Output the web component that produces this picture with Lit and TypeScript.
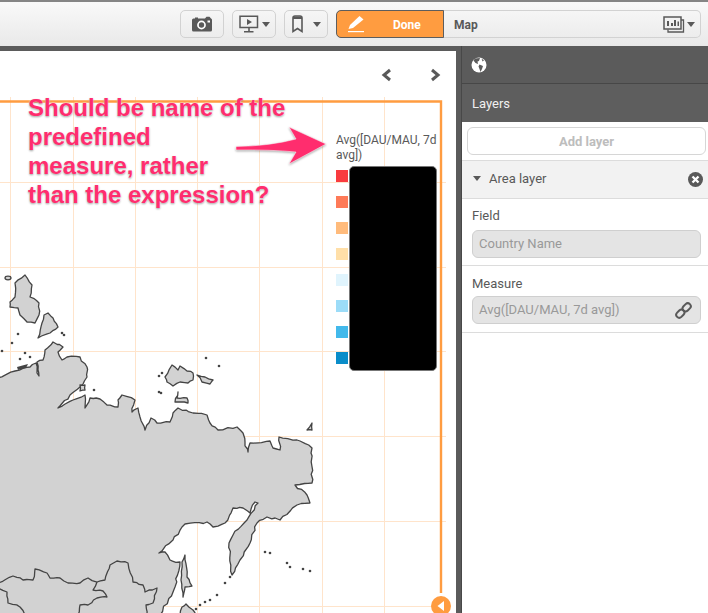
import { LitElement, html, css, svg } from "lit";
import { customElement } from "lit/decorators.js";

type P = [number, number];

// small deterministic wobble so the coast does not look polygonal
function rough(pts: P[], closed = true, amp = 1.1): string {
  let seed = 7;
  const rnd = () => {
    seed = (seed * 16807) % 2147483647;
    return (seed % 1000) / 500 - 1;
  };
  const out: P[] = [];
  const n = pts.length;
  for (let i = 0; i < n; i++) {
    const a = pts[i];
    out.push(a);
    if (i === n - 1 && !closed) break;
    const b = pts[(i + 1) % n];
    const d = Math.hypot(b[0] - a[0], b[1] - a[1]);
    const steps = Math.floor(d / 5);
    for (let k = 1; k <= steps; k++) {
      const t = k / (steps + 1);
      out.push([a[0] + (b[0] - a[0]) * t + rnd() * amp, a[1] + (b[1] - a[1]) * t + rnd() * amp]);
    }
  }
  return "M" + out.map((p) => p[0].toFixed(1) + " " + p[1].toFixed(1)).join("L") + (closed ? "Z" : "");
}

const MAINLAND: P[] = [
  [-3, 378], [15, 371], [30, 367], [36, 363], [37, 373], [39, 376], [38, 370], [37, 362], [43, 360], [45, 350], [53, 342],
  [63, 347], [58, 352], [62, 360], [67, 357], [80, 357], [87, 367], [87, 377], [80, 387], [70, 395], [58, 408], [73, 400],
  [85, 395], [85, 408], [90, 398], [100, 399], [107, 405], [118, 407], [118, 400], [122, 395], [135, 400], [132, 412], [138, 408], [140, 417],
  [145, 430], [151, 418], [157, 423], [170, 422], [173, 413], [178, 408], [193, 413], [207, 415], [210, 423], [218, 430],
  [237, 427], [243, 433], [245, 442], [248, 452], [250, 443], [270, 441], [273, 448], [280, 450], [279, 437], [297, 440],
  [312, 448], [312, 483], [295, 485], [307, 495], [310, 503], [297, 505], [280, 520], [267, 517], [257, 523], [250, 543],
  [240, 560], [232, 575], [229, 543], [233, 535], [247, 520], [258, 503], [255, 502], [250, 513], [243, 508], [233, 508],
  [225, 523], [213, 527], [207, 522], [185, 524], [173, 540], [159, 553], [165, 552], [170, 560], [180, 562], [175, 587],
  [160, 615], [-3, 615],
];
const ISLANDS: P[][] = [
  [[25, 275], [32, 285], [30, 297], [39, 303], [39, 315], [35, 323], [27, 322], [20, 315], [18, 308], [10, 307], [10, 302], [15, 297], [15, 283]],
  [[48, 313], [53, 318], [58, 327], [50, 333], [38, 338], [42, 323], [44, 315]],
  [[165, 377], [172, 365], [178, 370], [180, 366], [187, 371], [193, 373], [193, 380], [188, 383], [180, 382], [173, 386], [167, 382]],
  [[197, 375], [205, 377], [213, 380], [210, 384], [202, 382]],
  [[178, 392], [177, 398], [187, 398], [188, 403], [175, 402]],
  [[307, 430], [312, 423], [312, 430]],
  [[80, 385], [85, 385], [85, 390], [80, 391]],
  [[182, 562], [185, 555], [187, 577], [192, 586], [185, 587], [183, 597], [181, 580]],
  [[182, 607], [186, 604], [193, 610], [196, 615], [180, 615]],
];
const SPECKS: P[] = [
  [18, 334], [12, 343], [62, 333], [64, 335], [2, 351], [25, 353], [20, 359], [30, 357], [94, 390], [159, 376], [159, 392],
  [162, 373], [206, 358], [219, 366], [161, 393], [265, 552], [270, 553], [287, 563], [290, 567], [303, 569], [310, 571],
  [230, 577], [225, 583], [217, 595], [210, 600], [205, 602], [200, 605], [196, 609],
];
const LINES: P[][] = [
  [[-2, 583], [13, 576], [23, 580], [33, 580], [35, 569], [47, 573], [50, 578], [60, 578], [68, 583], [80, 583], [88, 578], [97, 582], [105, 580], [110, 565], [117, 561], [128, 563], [133, 582], [143, 585], [145, 592], [157, 588], [153, 603], [146, 605], [147, 615]],
  [[97, 582], [93, 590], [103, 591], [107, 597], [97, 598], [88, 605], [80, 605], [78, 615]],
  [[-2, 588], [7, 592], [8, 603], [20, 607], [25, 615]],
];

const VERT = [10, 73, 135, 197, 259, 322, 384];
const HORZ = [182.5, 267.5, 351.5, 436.5, 521.5, 606.5];
const SWATCHES = ["#f93b3f", "#fe7a58", "#ffbb7c", "#ffdfa8", "#e0f4fd", "#9cdcf8", "#42b9eb", "#0a8dc9"];

@customElement("app-root")
export class AppRoot extends LitElement {
  static styles = css`
    :host { display: block; width: 708px; height: 613px; overflow: hidden; font-family: "Roboto", "Liberation Sans", sans-serif; background: #5b5b5b; }
    .root { display: flex; flex-direction: column; height: 613px; }
    .toolbar { height: 46px; flex: none; display: flex; align-items: flex-start; gap: 8px; padding: 8px 7px 0 180px; box-sizing: border-box; border-top: 2px solid #858585; background: linear-gradient(#f9f9f9, #e9e9e9); }
    .btn { width: 44px; height: 28px; box-sizing: border-box; border: 1px solid #d2d2d2; border-radius: 5px; display: flex; align-items: center; justify-content: center; gap: 3px; }
    .caret { width: 0; height: 0; border-left: 4px solid transparent; border-right: 4px solid transparent; border-top: 5px solid #595959; }
    .tabs { flex: 1; height: 28px; display: flex; box-sizing: border-box; border: 1px solid #d2d2d2; border-left: none; border-radius: 5px; align-items: center; }
    .done { width: 108px; height: 28px; box-sizing: border-box; flex: none; background: #ff9c40; border: 1px solid #5d5d5d; border-radius: 5px 0 0 5px; display: flex; align-items: center; margin-top: -1px; color: #fff; font-weight: 700; font-size: 12px; }
    .done svg { margin-left: 10px; }
    .done span { margin-left: 28px; padding-top: 2px; }
    .maplabel { margin-left: 10px; padding-top: 2px; font-size: 12px; font-weight: 700; color: #595959; flex: 1; }
    .viewicon { display: flex; align-items: center; gap: 2px; margin-right: 5px; }
    .body { flex: 1; display: flex; min-height: 0; }
    .canvas { width: 456px; flex: none; margin-top: 5px; background: #fff; position: relative; overflow: hidden; }
    .canvas > svg.map { display: block; }
    .gutter { width: 6px; flex: none; box-sizing: border-box; border-right: 1px solid #484848; background: #5b5b5b; }
    .panel { flex: 1; display: flex; flex-direction: column; background: #fff; min-width: 0; }
    .phead { height: 38px; flex: none; box-sizing: border-box; background: #5b5b5b; border-bottom: 1px solid #474747; display: flex; align-items: center; padding-left: 9px; }
    .layers { height: 38px; flex: none; box-sizing: border-box; background: #5e5e5e; color: #f0f0f0; font-size: 13px; display: flex; align-items: center; padding-left: 10px; }
    .add { margin: 5px 2px 0 5px; height: 28px; box-sizing: border-box; border: 1px solid #d6d6d6; border-radius: 6px; display: flex; align-items: center; justify-content: center; color: #bdbdbd; font-size: 13px; font-weight: 700; }
    .layerrow { margin-top: 5px; height: 39px; box-sizing: border-box; background: #f2f2f2; border-top: 1px solid #dcdcdc; border-bottom: 1px solid #dcdcdc; display: flex; align-items: center; padding: 0 5px 0 11px; color: #595959; font-size: 13px; }
    .tri { width: 0; height: 0; border-left: 4px solid transparent; border-right: 4px solid transparent; border-top: 5px solid #595959; margin-right: 8px; margin-bottom: 2px; }
    .layerrow span { flex: 1; padding-bottom: 2px; }
    .group { height: 67px; box-sizing: border-box; border-bottom: 1px solid #dcdcdc; padding: 9px 7px 0 10px; color: #595959; font-size: 13px; }
    .group label { display: block; line-height: 15px; height: 15px; margin-bottom: 7px; }
    .group + .group { height: 67px; padding-top: 10px; }
    .group + .group label { margin-bottom: 5px; }
    .input { height: 28px; box-sizing: border-box; background: #e4e4e4; border: 1px solid #cfcfcf; border-radius: 6px; display: flex; align-items: center; justify-content: space-between; padding: 0 8px 2px 6px; color: #999; font-size: 13px; }
    .input svg { margin-top: 2px; }
    .legend { position: absolute; left: 336px; top: 82px; width: 104px; font-size: 12px; line-height: 15px; color: #595959; }
    .swatches { display: flex; flex-direction: column; gap: 14px; margin-top: 7px; }
    .swatch { width: 12px; height: 12px; }
    .mask { position: absolute; left: 349px; top: 115px; width: 88px; height: 205px; box-sizing: border-box; background: #000; border: 1px solid #777; border-radius: 5px; }
    .note { position: absolute; left: 28px; top: 42px; font-family: "Liberation Sans", Arial, sans-serif; font-weight: 700; font-size: 24px; line-height: 29px; color: #ff2d6e; text-shadow: 0 0 2px #fff, 0 1px 2px rgba(0, 0, 0, 0.45); white-space: pre; }
  `;

  private map() {
    return svg`
      <svg class="map" width="456" height="562" viewBox="0 51 456 562">
        <g stroke="#ffe4cb" stroke-width="1" fill="none">
          ${VERT.map((x) => svg`<line x1=${x + 0.5} y1="97" x2=${x + 0.5} y2="613"></line>`)}
          ${HORZ.map((y) => svg`<line x1="0" y1=${y} x2="446" y2=${y}></line>`)}
        </g>
        <path d="M0 101.5H441V593" fill="none" stroke="#ff9c40" stroke-width="2.4"></path>
        <g fill="#d2d2d2" stroke="#444" stroke-width="1.3" stroke-linejoin="round">
          <path d=${rough(MAINLAND)}></path>
          ${ISLANDS.map((p) => svg`<path d=${rough(p, true, 0.8)}></path>`)}
          <ellipse cx="8" cy="278" rx="3" ry="1.8"></ellipse>
          ${LINES.map((p) => svg`<path d=${rough(p, false, 0.9)} fill="none"></path>`)}
        </g>
        <g fill="#444">
          ${SPECKS.map((p) => svg`<circle cx=${p[0]} cy=${p[1]} r="1.3"></circle>`)}
          <path d="M17 367L28 364L26 368L18 370Z"></path>
        </g>
        <g fill="none" stroke="#595959" stroke-width="3">
          <path d="M390 70L384 75L390 80"></path>
          <path d="M432 70L438 75L432 80"></path>
        </g>
        <circle cx="441" cy="606" r="10" fill="#ff9c40"></circle>
        <path d="M444 601V611L437.5 606Z" fill="#fff"></path>
        <path d="M236 146.5Q270 146 296 139L289 127L326 144L289 164L296 152Q270 149.5 236 150Z" fill="#ff2d6e" stroke="#fff" stroke-width="0.5" style="filter: drop-shadow(0 1px 1px rgba(0,0,0,.35))"></path>
      </svg>
    `;
  }

  render() {
    return html`
      <div class="root">
        <div class="toolbar">
          <div class="btn">
            <svg width="20" height="16" viewBox="0 0 20 16">
              <path fill="#595959" d="M1.5 2.5H3V1.5H6V2.5H13L14.5.8H17.5L19 2.5Q20 2.5 20 4V14Q20 15.5 18.5 15.5H1.5Q0 15.5 0 14V4Q0 2.5 1.5 2.5Z"></path>
              <circle cx="9.5" cy="9" r="4.4" fill="#fff"></circle>
              <circle cx="9.5" cy="9" r="2.7" fill="#595959"></circle>
              <rect x="15.5" y="4.5" width="2.5" height="2" fill="#fff"></rect>
            </svg>
          </div>
          <div class="btn">
            <svg width="20" height="19" viewBox="0 0 20 19">
              <path fill="none" stroke="#595959" stroke-width="1.5" d="M1 1.2H18.5V12.5H1Z"></path>
              <path fill="#595959" d="M8 4L13 7L8 10ZM9.2 12.5H10.8V16H14.5V17.5H5V16H9.2Z"></path>
            </svg>
            <span class="caret"></span>
          </div>
          <div class="btn">
            <svg width="14" height="18" viewBox="0 0 14 18" style="margin-right:5px">
              <path fill="none" stroke="#595959" stroke-width="1.6" d="M2 3Q2 1 4 1H9Q11 1 11 3V16.5L6.5 13.5L2 16.5Z"></path>
              <path fill="#595959" d="M2 1.5H11V4H2Z"></path>
            </svg>
            <span class="caret"></span>
          </div>
          <div class="tabs">
            <div class="done">
              <svg width="18" height="18" viewBox="0 0 18 18">
                <path fill="#fff" d="M12.5 1L16.5 4.5L6 13L1.5 14L3 10Z"></path>
                <rect x="1" y="16" width="16" height="1.2" fill="#fff"></rect>
              </svg>
              <span>Done</span>
            </div>
            <div class="maplabel">Map</div>
            <div class="viewicon">
              <svg width="22" height="17" viewBox="0 0 22 17">
                <path fill="none" stroke="#595959" stroke-width="1.3" d="M5 13.5V16H20.5V4H18"></path>
                <path fill="none" stroke="#595959" stroke-width="1.5" d="M1 1H18V13H1Z"></path>
                <path fill="#595959" d="M4 5H6V10H4ZM8 7H10V10H8ZM11 4H13V10H11ZM14.5 5.5H16V10H14.5Z"></path>
              </svg>
              <span class="caret"></span>
            </div>
          </div>
        </div>
        <div class="body">
          <div class="canvas">
            ${this.map()}
            <div class="note">Should be name of the
predefined
measure, rather
than the expression?</div>
            <div class="legend">
              Avg([DAU/MAU, 7d avg])
              <div class="swatches">
                ${SWATCHES.map((c) => html`<div class="swatch" style="background:${c}"></div>`)}
              </div>
            </div>
            <div class="mask"></div>
          </div>
          <div class="gutter"></div>
          <div class="panel">
            <div class="phead">
              <svg width="16" height="16" viewBox="0 0 16 16">
                <circle cx="8" cy="8" r="7.5" fill="#fff"></circle>
                <path fill="#5b5b5b" d="M4 1.5L9 1L8 4L6.5 4.5L7 7L4.5 6L2.5 3.5ZM8.5 7.5L12 9L11 12L9.5 15L8.5 12L7.5 9.5ZM10.5 1.5L13 3.5L11.5 4.5Z"></path>
              </svg>
            </div>
            <div class="layers">Layers</div>
            <div class="add">Add layer</div>
            <div class="layerrow">
              <i class="tri"></i>
              <span>Area layer</span>
              <svg width="15" height="15" viewBox="0 0 14 14">
                <circle cx="7" cy="7" r="7" fill="#595959"></circle>
                <path d="M4.2 4.2L9.8 9.8M9.8 4.2L4.2 9.8" stroke="#fff" stroke-width="2.2"></path>
              </svg>
            </div>
            <div class="group">
              <label>Field</label>
              <div class="input">Country Name</div>
            </div>
            <div class="group">
              <label>Measure</label>
              <div class="input">
                Avg([DAU/MAU, 7d avg])
                <svg width="17" height="17" viewBox="0 0 17 17">
                  <g fill="none" stroke="#595959" stroke-width="2" transform="rotate(-45 8.5 8.5)">
                    <rect x="-0.5" y="5.5" width="9" height="6" rx="3"></rect>
                    <rect x="8.5" y="5.5" width="9" height="6" rx="3"></rect>
                  </g>
                </svg>
              </div>
            </div>
          </div>
        </div>
      </div>
    `;
  }
}
